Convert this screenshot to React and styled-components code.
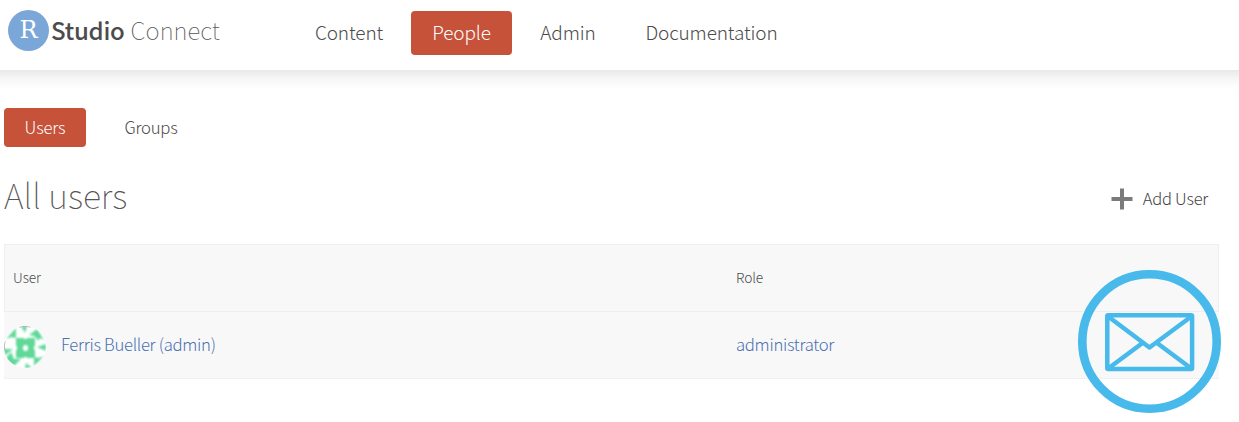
import React from "react";
import styled, { createGlobalStyle } from "styled-components";

const GlobalStyle = createGlobalStyle`
  * { box-sizing: border-box; }
  html, body { margin: 0; background: #fff; overflow: hidden; }
  body {
    font-family: "Noto Sans CJK SC", "Noto Sans", sans-serif;
    font-weight: 300;
    color: #4b4b4b;
  }
  a { color: inherit; text-decoration: none; }
`;

const Page = styled.div`
  width: 1239px;
  height: 422px;
  position: relative;
  overflow: hidden;
`;

const Header = styled.header`
  display: flex;
  align-items: flex-start;
  height: 70px;
  padding-left: 8px;
`;

const HeaderShade = styled.div`
  height: 20px;
  background: linear-gradient(#e9e9e9, #f5f5f5 40%, #fcfcfc 75%, #fff);
`;

const Brand = styled.a`
  display: flex;
  width: 296px;
  padding-top: 10px;
  line-height: 39px;
  white-space: nowrap;
`;

const Monogram = styled.span`
  width: 41px;
  height: 41px;
  border-radius: 50%;
  background: #7ba6d8;
  color: #fff;
  font: 400 24px/40px "DejaVu Serif", serif;
  text-align: center;
`;

const BrandName = styled.span`
  margin-left: ${(p) => (p.$strong ? 2 : 6)}px;
  font-size: 24px;
  font-weight: ${(p) => (p.$strong ? 500 : 100)};
  letter-spacing: ${(p) => (p.$strong ? "-0.25px" : "0.05px")};
  color: ${(p) => (p.$strong ? "#4c4c4c" : "#555")};
`;

const Nav = styled.nav`
  display: flex;
  padding-top: 11px;
`;

const NavItem = styled.a`
  width: ${(p) => p.$width}px;
  height: 44px;
  margin-right: ${(p) => p.$gap || 0}px;
  border-radius: 4px;
  font-size: 19px;
  line-height: 42px;
  letter-spacing: -0.13px;
  text-align: center;
  white-space: nowrap;
  color: ${(p) => (p.$active ? "#fff" : "#4b4b4b")};
  background: ${(p) => (p.$active ? "#c6523a" : "transparent")};
`;

const Tabs = styled.div`
  display: flex;
  padding: 18px 0 0 4px;
`;

const Tab = styled.a`
  width: ${(p) => p.$width}px;
  height: 39px;
  border-radius: 4px;
  margin-right: 18px;
  font-size: 16.7px;
  line-height: 39px;
  letter-spacing: -0.2px;
  text-align: center;
  color: ${(p) => (p.$active ? "#fff" : "#4b4b4b")};
  background: ${(p) => (p.$active ? "#c6523a" : "transparent")};
`;

const TitleBar = styled.div`
  display: flex;
  justify-content: space-between;
  height: 97px;
  padding: 23px 30px 0 4px;
`;

const Title = styled.h1`
  margin: 0;
  font-size: 34px;
  line-height: 50px;
  font-weight: 100;
  color: #555;
`;

const AddUser = styled.a`
  display: flex;
  align-items: center;
  gap: 10px;
  height: 22px;
  margin: 18px 1px 0 0;
  font-size: 16.5px;
  line-height: 22px;
  letter-spacing: -0.25px;
  color: #444;
`;

const AddLabel = styled.span`
  padding-bottom: 2px;
`;

const Table = styled.div`
  width: 1215px;
  margin-left: 4px;
`;

const Row = styled.div`
  display: grid;
  grid-template-columns: 723px 1fr;
  align-items: center;
  height: 67px;
  background: #f8f8f8;
  border-bottom: 1px dotted #e9e9e9;
  font-size: 16.7px;
  letter-spacing: -0.3px;
  color: #4a70b0;
`;

const HeadRow = styled(Row)`
  height: 68px;
  border: 1px solid #eee;
  font-size: 13.8px;
  letter-spacing: -0.1px;
  color: #4b4b4b;
`;

const Cell = styled.div`
  display: flex;
  align-items: center;
  line-height: 24px;
  padding: 0 0 ${(p) => (p.$pad ? 2 : 0)}px ${(p) => p.$pad || 0}px;
`;

const UserName = styled.span`
  padding-bottom: 2px;
`;

const Avatar = styled.svg`
  width: 42px;
  height: 42px;
  margin-right: 15px;
  border-radius: 50%;
  margin-top: 3px;
`;

const MailBadge = styled.svg`
  position: absolute;
  left: 1078px;
  top: 270px;
  width: 143px;
  height: 143px;
  fill: none;
  stroke: #47b9ea;
`;

export default function App() {
  return (
    <Page>
      <GlobalStyle />
      <Header>
        <Brand>
          <Monogram>R</Monogram>
          <BrandName $strong>Studio</BrandName>
          <BrandName>Connect</BrandName>
        </Brand>
        <Nav>
          <NavItem $width={90} $gap={17}>Content</NavItem>
          <NavItem $width={101} $gap={20} $active>People</NavItem>
          <NavItem $width={72} $gap={27}>Admin</NavItem>
          <NavItem $width={161}>Documentation</NavItem>
        </Nav>
      </Header>
      <HeaderShade />
      <Tabs>
        <Tab $width={82} $active>Users</Tab>
        <Tab $width={94}>Groups</Tab>
      </Tabs>
      <TitleBar>
        <Title>All users</Title>
        <AddUser>
          <svg width="22" height="22" viewBox="0 0 22 22" stroke="#7b7b7b" strokeWidth="4">
            <path d="M0.5 11H21.5M11 0.5V21.5" />
          </svg>
          <AddLabel>Add User</AddLabel>
        </AddUser>
      </TitleBar>
      <Table>
        <HeadRow>
          <Cell $pad={8}>User</Cell>
          <Cell $pad={8}>Role</Cell>
        </HeadRow>
        <Row>
          <Cell>
            <Avatar viewBox="0 0 42 42">
              <defs>
                <filter id="soft"><feGaussianBlur stdDeviation="1" /></filter>
              </defs>
              <rect width="42" height="42" fill="#fff" />
              <g fill="#5fd898" filter="url(#soft)">
                <path d="M12 12h8v8h-8zM23 12h8v8h-8zM12 24h8v8h-8zM23 24h8v8h-8z" />
                <path d="M19 13h5v6h-5zM13 19h6v6h-6zM24 19h6v6h-6zM19 25h5v6h-5z" />
                <path d="M2 13L12 2V12Q7 10 2 13ZM25 9L33 3L40 14L36 12L34 15Q32 9 25 9Z" />
                <path d="M2 32L7 26L10 33H17L10 40L2 36ZM40 30L30 40L30 31Q35 33 40 30Z" />
                <path d="M17 0H23L21 7ZM0 23L9 23L0 30ZM42 18L33 21L42 25ZM21 42L22 37L28 42Z" />
              </g>
              <path d="M15 1Q21 -0.5 27 1M1 15Q-0.5 21 1 25" stroke="#aaa" fill="none" />
            </Avatar>
            <UserName>Ferris Bueller (admin)</UserName>
          </Cell>
          <Cell $pad={9}>administrator</Cell>
        </Row>
      </Table>
      <MailBadge viewBox="0 0 143 143">
        <circle cx="71.5" cy="71.5" r="67.2" strokeWidth="8.6" />
        <g strokeWidth="4.5" strokeLinejoin="round">
          <rect x="29.3" y="45.3" width="84.8" height="53.8" rx="1" />
          <path d="M29.5 46L71.5 77.5L114 46M29.5 99L64.5 73M114 99L79 73" />
        </g>
      </MailBadge>
    </Page>
  );
}
